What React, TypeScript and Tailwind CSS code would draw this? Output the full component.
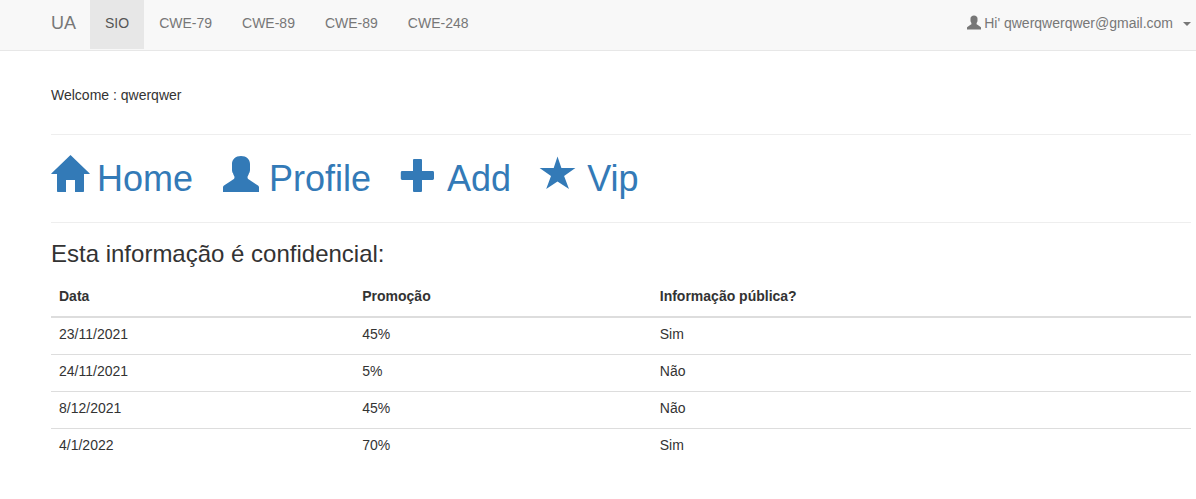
import React from "react";

const navLinks = ["SIO", "CWE-79", "CWE-89", "CWE-89", "CWE-248"];

const rows = [
  { date: "23/11/2021", promo: "45%", isPublic: "Sim" },
  { date: "24/11/2021", promo: "5%", isPublic: "Não" },
  { date: "8/12/2021", promo: "45%", isPublic: "Não" },
  { date: "4/1/2022", promo: "70%", isPublic: "Sim" },
];

const USER_PATH =
  "M18 3C23.5 3 27 6.4 27 11V17C27 18 26.6 19.6 26 20.3C25.6 22 24.5 23 24.5 24.2C24.5 25.6 25.4 26.3 27 27.2L35 32.6C35.8 33.2 36 33.8 36 34.6V39H0V34.6C0 33.8 .2 33.2 1 32.6L9 27.2C10.6 26.3 11.5 25.6 11.5 24.2C11.5 23 10.4 22 10 20.3C9.4 19.6 9 18 9 17V11C9 6.4 12.5 3 18 3Z";

const actions = [
  {
    label: "Home",
    path: "M19.5 2L38.7 20.4V21H33V38.2Q33 39 32.2 39H24V27H15V39H6.8Q6 39 6 38.2V21H.3V20.4Z",
  },
  { label: "Profile", path: USER_PATH },
  {
    label: "Add",
    path: "M13 6H20Q21 6 21 7V18H31.6Q33 18 33 19.4V25.6Q33 27 31.6 27H21V38Q21 39 20 39H13Q12 39 12 38V27H1.2Q-.2 27 -.2 25.6V19.4Q-.2 18 1.2 18H12V7Q12 6 13 6Z",
  },
  {
    label: "Vip",
    path: "M16.5 3.5L20.4 15H34.4L23.1 22.9L28 36L16.5 28.5L5.2 36L10 22.9L-1.4 15H12.7Z",
  },
];

function Glyph({ path, className }: { path: string; className: string }) {
  return (
    <svg viewBox="0 0 36 40" fill="currentColor" aria-hidden="true" className={className}>
      <path d={path} />
    </svg>
  );
}

export default function App() {
  return (
    <div className="bg-white font-['Liberation_Sans',Arial,sans-serif] text-sm leading-5 text-[#333]">
      <nav className="border-b border-[#e7e7e7] bg-[#f8f8f8] pr-[5px] pb-px pl-[51px] text-[#777]">
        <div className="flex items-start">
          <a href="#" className="pt-[13px] pr-3.5 text-lg leading-5">
            UA
          </a>
          <ul className="flex">
            {navLinks.map((label, i) => (
              <li key={i}>
                <a
                  href="#"
                  className={
                    i === 0
                      ? "block bg-[#e7e7e7] px-[15px] pt-[13px] pb-4 text-[#555]"
                      : "block px-[15px] pt-[13px] pb-4"
                  }
                >
                  {label}
                </a>
              </li>
            ))}
          </ul>
          <button type="button" className="ml-auto flex items-center pt-[13px] pb-4">
            <Glyph path={USER_PATH} className="mr-[3px] mb-0.5 h-4 w-3.5" />
            Hi' qwerqwerqwer@gmail.com
            <svg viewBox="0 0 8 4" fill="currentColor" aria-hidden="true" className="mt-0.5 ml-2.5 h-1 w-2">
              <path d="M0 0H8L4 4Z" />
            </svg>
          </button>
        </div>
      </nav>

      <main className="pt-[34px] pr-[5px] pl-[51px]">
        <p>Welcome : qwerqwer</p>
        <hr className="mt-[29px] border-[#eee]" />
        <div className="flex gap-[30px] py-[18px] text-4xl leading-[51px] text-[#337ab7]">
          {actions.map(({ label, path }) => (
            <a key={label} href="#" className="flex gap-2.5">
              <Glyph path={path} className="h-10 w-9 overflow-visible" />
              {label}
            </a>
          ))}
        </div>
        <hr className="border-[#eee]" />
        <h3 className="mt-[18px] mb-2.5 text-2xl leading-[26px]">Esta informação é confidencial:</h3>
        <table className="w-full table-fixed border-collapse text-left">
          <thead>
            <tr className="border-b-2 border-[#ddd]">
              <th className="w-[26.6%] px-2 pt-[9px] pb-2.5 font-bold">Data</th>
              <th className="w-[26.1%] px-2 pt-[9px] pb-2.5 font-bold">Promoção</th>
              <th className="px-2 pt-[9px] pb-2.5 font-bold">Informação pública?</th>
            </tr>
          </thead>
          <tbody>
            {rows.map((row) => (
              <tr key={row.date} className="border-b border-[#ddd] last:border-b-0">
                <td className="px-2 pt-1.5 pb-2.5">{row.date}</td>
                <td className="px-2 pt-1.5 pb-2.5">{row.promo}</td>
                <td className="px-2 pt-1.5 pb-2.5">{row.isPublic}</td>
              </tr>
            ))}
          </tbody>
        </table>
      </main>
    </div>
  );
}
